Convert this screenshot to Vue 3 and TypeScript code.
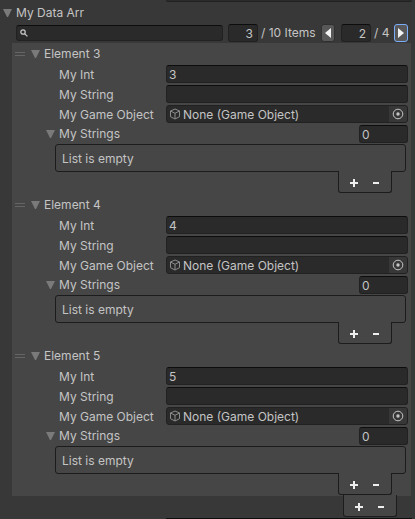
<script setup lang="ts">
import { reactive, ref } from 'vue'

interface DataEntry {
  index: number
  myInt: string
  myString: string
  size: string
}

const search = ref('')
const itemsPerPage = ref('3')
const page = ref('2')
const entries = reactive<DataEntry[]>([
  { index: 3, myInt: '3', myString: '', size: '0' },
  { index: 4, myInt: '4', myString: '', size: '0' },
  { index: 5, myInt: '5', myString: '', size: '0' },
])
</script>

<template>
  <main class="inspector">
    <div class="edge edge-top"></div>
    <button class="foldout title" type="button" aria-expanded="true">
      <svg class="arrow" viewBox="0 0 9 8"><path d="M0 0H9L5 8H4Z" /></svg>
      <span>My Data Arr</span>
    </button>

    <div class="toolbar">
      <label class="search">
        <svg class="lens" viewBox="0 0 8 8">
          <circle cx="3" cy="3" r="2.2" />
          <path d="M4.6 4.6L7.4 7.4" />
        </svg>
        <input v-model="search" type="text" aria-label="Search" />
      </label>
      <input v-model="itemsPerPage" class="field count" type="text" aria-label="Items on page" />
      <span class="total items">/ 10 Items</span>
      <button class="pager" type="button" aria-label="Previous page">
        <svg viewBox="0 0 6 10"><path d="M6 0V10L0 5Z" /></svg>
      </button>
      <input v-model="page" class="field count page" type="text" aria-label="Page" />
      <span class="total pages">/ 4</span>
      <button class="pager focused" type="button" aria-label="Next page">
        <svg viewBox="0 0 6 10"><path d="M0 0V10L6 5Z" /></svg>
      </button>
    </div>

    <div class="list">
      <section v-for="entry in entries" :key="entry.index" class="element">
        <header class="element-head">
          <span class="grip"></span>
          <button class="foldout" type="button" aria-expanded="true">
            <svg class="arrow" viewBox="0 0 9 8"><path d="M0 0H9L5 8H4Z" /></svg>
            <span>Element {{ entry.index }}</span>
          </button>
        </header>
        <div class="rows">
          <div class="row">
            <label :for="`int-${entry.index}`">My Int</label>
            <input :id="`int-${entry.index}`" v-model="entry.myInt" class="field" type="text" />
          </div>
          <div class="row">
            <label :for="`string-${entry.index}`">My String</label>
            <input :id="`string-${entry.index}`" v-model="entry.myString" class="field" type="text" />
          </div>
          <div class="row">
            <label :for="`object-${entry.index}`">My Game Object</label>
            <div class="field object">
              <svg class="cube" viewBox="0 0 12 12">
                <path d="M6 1L10.5 3V8.7L6 11L1.5 8.7V3ZM1.5 3L6 5.3L10.5 3M6 5.3V11" />
              </svg>
              <span class="object-name">None (Game Object)</span>
              <button :id="`object-${entry.index}`" class="picker" type="button">
                <svg viewBox="0 0 12 12">
                  <circle class="ring" cx="6" cy="6" r="4.8" />
                  <circle class="dot" cx="6" cy="6" r="1.7" />
                </svg>
              </button>
            </div>
          </div>
          <div class="row strings">
            <button class="foldout" type="button" aria-expanded="true">
              <svg class="arrow" viewBox="0 0 9 8"><path d="M0 0H9L5 8H4Z" /></svg>
              <span>My Strings</span>
            </button>
            <input v-model="entry.size" class="field size" type="text" aria-label="My Strings size" />
          </div>
        </div>
        <div class="nested">
          <div class="empty">List is empty</div>
          <div class="footer">
            <button type="button" aria-label="Add">
              <svg viewBox="0 0 10 10"><path d="M5 1V9M1 5H9" /></svg>
            </button>
            <button type="button" aria-label="Remove">
              <svg viewBox="0 0 10 10"><path d="M2 5H8" /></svg>
            </button>
          </div>
        </div>
      </section>
    </div>
    <div class="footer outer">
      <button type="button" aria-label="Add">
        <svg viewBox="0 0 10 10"><path d="M5 1V9M1 5H9" /></svg>
      </button>
      <button type="button" aria-label="Remove">
        <svg viewBox="0 0 10 10"><path d="M2 5H8" /></svg>
      </button>
    </div>
    <div class="edge edge-bottom"></div>
  </main>
</template>

<style>
body {
  background: #383838;
}
</style>

<style scoped>
.inspector,
.inspector * {
  box-sizing: border-box;
}
.inspector {
  color: #c4c4c4;
  font: 12px/18px Inter, sans-serif;
  background: #383838;
}
button,
input {
  margin: 0;
  padding: 0;
  border: 0;
  color: inherit;
  font: inherit;
  background: none;
  outline: none;
}
svg {
  display: block;
  flex: none;
}
.edge {
  margin: 0 3px 0 166px;
}
.edge-top {
  height: 2px;
  background: #2a2a2a;
  border-bottom: 1px solid #212121;
  border-radius: 0 0 3px 3px;
}
.edge-bottom {
  height: 1px;
  margin-top: 1px;
  background: #0d0d0d;
}
.foldout {
  display: flex;
  align-items: center;
  height: 18px;
  gap: 4px;
  white-space: nowrap;
}
.arrow {
  width: 9px;
  height: 8px;
  fill: #7a7a7a;
}
.title {
  margin: 2px 0 2px 3px;
}
.toolbar {
  display: flex;
  align-items: center;
  height: 18px;
  margin: 0 7px 1px 16px;
}
.search {
  display: flex;
  flex: 1;
  align-items: center;
  min-width: 0;
  height: 16px;
  margin-right: 5px;
  padding-left: 3px;
  border: 1px solid #212121;
  border-top-color: #0d0d0d;
  border-radius: 3px;
  background: #2a2a2a;
}
.search input {
  flex: 1;
  min-width: 0;
  height: 14px;
  padding: 0 3px;
}
.lens {
  width: 8px;
  height: 8px;
  fill: none;
  stroke: #c4c4c4;
  stroke-width: 1.3;
}
.field {
  min-width: 0;
  height: 18px;
  padding: 1px 2px 0;
  border: 1px solid #212121;
  border-top-color: #0d0d0d;
  border-radius: 3px;
  background: #2a2a2a;
  line-height: 15px;
}
.count {
  width: 30px;
  padding-right: 4px;
  text-align: right;
}
.total {
  flex: none;
  height: 18px;
  padding-left: 3px;
  white-space: nowrap;
}
.items {
  width: 63px;
}
.pages {
  width: 23px;
}
.page {
  margin-left: 6px;
}
.pager {
  display: flex;
  align-items: center;
  justify-content: center;
  width: 14px;
  height: 18px;
  border: 1px solid #303030;
  border-radius: 3px;
  background: #585858;
}
.pager svg {
  width: 6px;
  height: 10px;
  fill: #f2f2f2;
}
.focused {
  border-color: #7baefa;
}
.list {
  margin: 0 4px 0 12px;
  background: #464646;
}
.element {
  padding: 1px 3px 1px 0;
}
.element-head {
  display: flex;
  align-items: center;
  height: 20px;
  margin-bottom: 1px;
  padding-left: 3px;
}
.grip {
  width: 10px;
  height: 4px;
  margin-right: 6px;
  border: solid #656565;
  border-width: 1px 0;
}
.rows {
  display: grid;
  gap: 2px;
}
.row {
  display: grid;
  grid-template-columns: 107px minmax(0, 1fr);
  align-items: start;
  height: 18px;
  margin-left: 47px;
}
.row label {
  padding-top: 1px;
  white-space: nowrap;
}
.strings {
  grid-template-columns: minmax(0, 1fr) 49px;
  margin-left: 34px;
}
.object {
  display: flex;
  align-items: center;
  padding: 0;
  border-color: #212121;
  overflow: hidden;
}
.cube {
  width: 12px;
  height: 12px;
  margin: 0 2px;
  fill: none;
  stroke: #8c8c8c;
}
.object-name {
  flex: 1;
  min-width: 0;
  height: 16px;
  line-height: 18px;
  white-space: nowrap;
}
.picker {
  display: flex;
  align-items: center;
  justify-content: center;
  width: 18px;
  height: 16px;
  background: #373737;
}
.picker svg {
  width: 12px;
  height: 12px;
}
.ring {
  fill: none;
  stroke: #c4c4c4;
}
.dot {
  fill: #c4c4c4;
}
.nested {
  margin: 1px 2px 0 43px;
}
.empty {
  height: 28px;
  padding: 5px 6px 0;
  border: 1px solid #1c1c1c;
  border-radius: 3px;
}
.footer {
  display: flex;
  align-items: center;
  width: 54px;
  height: 22px;
  margin: -1px 14px 0 auto;
  padding: 0 4px;
  position: relative;
  border: 1px solid #1c1c1c;
  border-top: 0;
  border-radius: 0 0 3px 3px;
  background: #464646;
}
.footer button {
  display: flex;
  flex: 1;
  align-items: end;
  justify-content: center;
  height: 20px;
  padding-bottom: 4px;
}
.footer svg {
  width: 10px;
  height: 10px;
  fill: none;
  stroke: #eeeeee;
  stroke-width: 2;
}
.outer {
  margin-right: 18px;
}
</style>
